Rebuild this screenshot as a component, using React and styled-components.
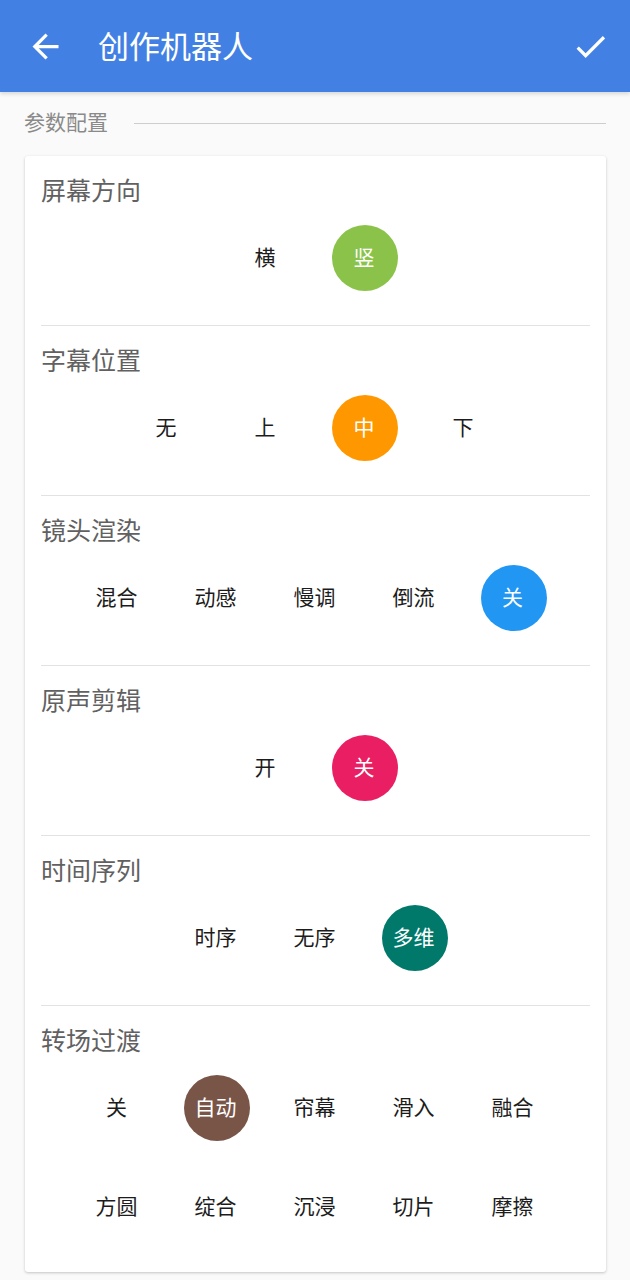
import styled, {createGlobalStyle} from "styled-components"
import {MdArrowBack, MdCheck} from "react-icons/md"

const GlobalStyle = createGlobalStyle`
	body {
		margin: 0;
		background: #fafafa;
		font-family: "Noto Sans CJK SC", "Noto Sans", Roboto, sans-serif;
	}
`

const Page = styled.div`
	width: 630px;
	min-height: 1280px;
	background: #fafafa;
`

const AppBar = styled.header`
	display: flex;
	align-items: center;
	height: 92px;
	padding: 0 20px 0 26px;
	box-sizing: border-box;
	background: #4281e3;
	color: #fff;
	box-shadow: 0 2px 4px rgba(0, 0, 0, 0.14);
`

const BarTitle = styled.h1`
	flex: 1;
	margin: 0 0 0 33px;
	padding-bottom: 3px;
	font-size: 31px;
	font-weight: 400;
	line-height: 40px;
`

const IconButton = styled.span`
	display: flex;
	align-items: center;
	justify-content: center;
	width: 39px;
	height: 39px;
`

const GroupHeader = styled.div`
	display: flex;
	align-items: center;
	gap: 26px;
	margin: 16px 24px 0 24px;
	height: 30px;
`

const GroupLabel = styled.span`
	font-size: 21px;
	line-height: 26px;
	padding-bottom: 4px;
	color: #8a8a8a;
`

const GroupLine = styled.div`
	flex: 1;
	height: 1px;
	background: #cdcdcd;
`

const Card = styled.div`
	margin: 18px 24px 8px 25px;
	padding: 0 16px;
	background: #fff;
	border-radius: 3px;
	box-shadow: 0 1px 3px rgba(0, 0, 0, 0.22);
`

const Section = styled.section`
	padding: 18px 0 ${(p) => (p.$last ? "16px" : "18px")};
	border-bottom: ${(p) => (p.$last ? "none" : "1px solid #e2e2e2")};
`

const SectionTitle = styled.div`
	font-size: 25px;
	line-height: 30px;
	color: #616161;
	margin-bottom: 4px;
`

const OptionRow = styled.div`
	display: flex;
	flex-wrap: wrap;
	justify-content: center;
	width: 495px;
	margin: 0 auto;
`

const OptionCell = styled.div`
	display: flex;
	align-items: center;
	justify-content: center;
	width: 99px;
	height: 99px;
`

const Option = styled.span`
	display: flex;
	align-items: center;
	justify-content: center;
	width: 66px;
	height: 66px;
	box-sizing: border-box;
	padding: 0 2px 3px 0;
	border-radius: 50%;
	font-size: 21px;
	color: ${(p) => (p.$active ? "#fff" : "#1c1c1c")};
	background: ${(p) => (p.$active ? p.$color : "transparent")};
`

const sections = [
	{title: "屏幕方向", options: ["横", "竖"], selected: 1, color: "#8bc34a"},
	{title: "字幕位置", options: ["无", "上", "中", "下"], selected: 2, color: "#ff9800"},
	{title: "镜头渲染", options: ["混合", "动感", "慢调", "倒流", "关"], selected: 4, color: "#2196f3"},
	{title: "原声剪辑", options: ["开", "关"], selected: 1, color: "#e91e63"},
	{title: "时间序列", options: ["时序", "无序", "多维"], selected: 2, color: "#00796b"},
	{
		title: "转场过渡",
		options: ["关", "自动", "帘幕", "滑入", "融合", "方圆", "绽合", "沉浸", "切片", "摩擦"],
		selected: 1,
		color: "#795548",
	},
]

export default function App() {
	return (
		<Page>
			<GlobalStyle />
			<AppBar>
				<IconButton>
					<MdArrowBack size={39} />
				</IconButton>
				<BarTitle>创作机器人</BarTitle>
				<IconButton>
					<MdCheck size={39} />
				</IconButton>
			</AppBar>

			<GroupHeader>
				<GroupLabel>参数配置</GroupLabel>
				<GroupLine />
			</GroupHeader>

			<Card>
				{sections.map((s, i) => (
					<Section key={s.title} $last={i === sections.length - 1}>
						<SectionTitle>{s.title}</SectionTitle>
						<OptionRow>
							{s.options.map((o, j) => (
								<OptionCell key={o + j}>
									<Option $active={j === s.selected} $color={s.color}>
										{o}
									</Option>
								</OptionCell>
							))}
						</OptionRow>
					</Section>
				))}
			</Card>
		</Page>
	)
}
